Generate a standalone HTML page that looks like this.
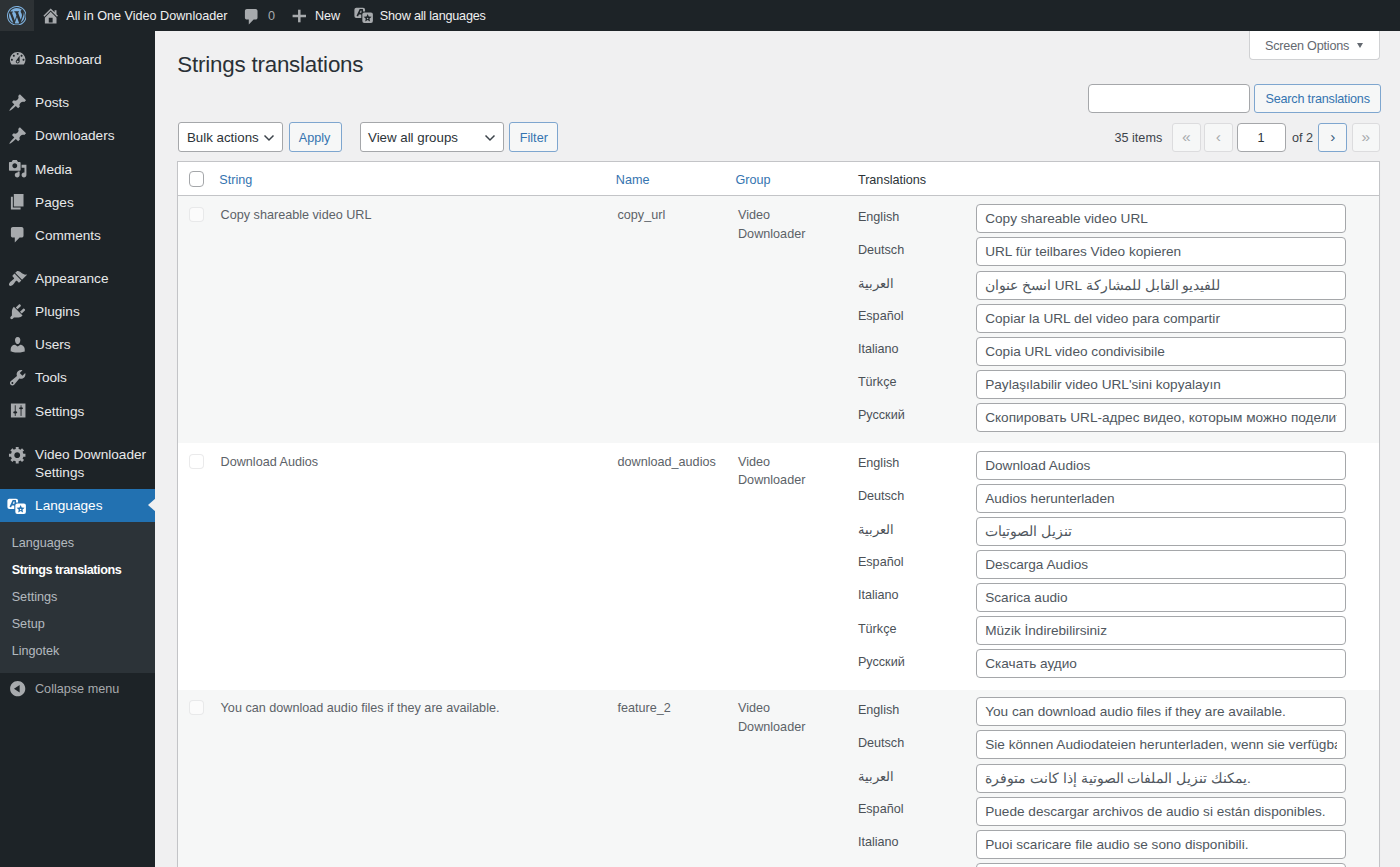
<!DOCTYPE html>
<html><head><meta charset="utf-8"><title>Strings translations</title>
<style>
html,body{margin:0;padding:0;width:1400px;height:867px;overflow:hidden;background:#f0f0f1}
body{position:relative;font-family:"Liberation Sans", sans-serif}
#root{position:absolute;left:0;top:0;width:1400px;height:867px;overflow:hidden;background:#f0f0f1}
.t{position:absolute;white-space:nowrap;line-height:normal;font-family:"Liberation Sans", sans-serif}
</style></head><body><div id="root">
<div style="position:absolute;left:0.00px;top:0.00px;width:1400.00px;height:31.10px;background:#1d2327"></div>
<div style="position:absolute;left:0.00px;top:0.00px;width:34.00px;height:31.10px;background:#2d3235"></div>
<svg style="position:absolute;left:6.90px;top:5.80px" width="19.60" height="19.60" viewBox="0 0 20 20"><path fill="#7eb1de" d="M20 10c0-5.52-4.48-10-10-10S0 4.48 0 10s4.48 10 10 10 10-4.48 10-10zM10 1.01c4.97 0 8.99 4.02 8.99 8.99s-4.02 8.99-8.99 8.99S1.01 14.970 1.01 10 5.03 1.01 10 1.01zM8.01 14.82L4.96 6.61c.49-.03 1.05-.08 1.05-.08.43-.05.38-1.01-.06-.99 0 0-1.290.1-2.13.1-.15 0-.33 0-.52-.01 1.44-2.17 3.9-3.6 6.7-3.6 2.09 0 3.99.79 5.41 2.09-.6-.08-1.45.35-1.45 1.42 0 .66.38 1.22.79 1.880.31.54.5 1.22.5 2.21 0 1.34-1.27 4.48-1.27 4.48l-2.71-7.5c.48-.03.75-.16.75-.16.43-.05.38-1.1-.05-1.08 0 0-1.3.11-2.140.11-.78 0-2.11-.11-2.11-.11-.43-.02-.48 1.06-.05 1.08l.84.08 1.12 3.04zm6.02 2.15L16.64 10s.67-1.69.39-3.81c.63 1.14.94 2.42.94 3.81 0 2.96-1.56 5.58-3.94 6.97zM2.68 6.77L6.5 17.25c-2.67-1.3-4.47-4.08-4.470-7.25 0-1.16.2-2.23.65-3.23zm7.45 4.53l2.29 6.25c-.75.27-1.57.42-2.42.42-.72 0-1.41-.11-2.06-.3z"/></svg>
<svg style="position:absolute;left:40.60px;top:5.80px" width="19.40" height="19.40" viewBox="0 0 20 20"><path fill="#a7aaad" d="M16 8.5l1.53 1.53-1.06 1.06L10 4.62l-6.47 6.47-1.06-1.06L10 2.5l4 4v-2h2v4zm-6-2.46l6 5.99V18H4v-5.97zM12 17v-5H8v5h4z"/></svg>
<div class="t" style="left:66.30px;top:9.16px;font-size:12.64px;color:#f0f0f1;font-weight:400;">All in One Video Downloader</div>
<svg style="position:absolute;left:242.00px;top:7.00px" width="19.40" height="19.40" viewBox="0 0 20 20"><path fill="#a7aaad" d="M5 2h9c1.1 0 2 .9 2 2v7c0 1.1-.9 2-2 2h-2l-5 5v-5H5c-1.1 0-2-.9-2-2V4c0-1.1.9-2 2-2z"/></svg>
<div class="t" style="left:268.00px;top:9.16px;font-size:12.64px;color:#a7aaad;font-weight:400;">0</div>
<svg style="position:absolute;left:290px;top:7px" width="18" height="18" viewBox="0 0 18 18"><rect x="2.6" y="7.75" width="13.4" height="2.5" fill="#a7aaad"/><rect x="8.05" y="2.7" width="2.5" height="12.6" fill="#a7aaad"/></svg>
<div class="t" style="left:314.90px;top:9.16px;font-size:12.64px;color:#f0f0f1;font-weight:400;">New</div>
<svg style="position:absolute;left:353.50px;top:5.30px" width="19.40" height="19.40" viewBox="0 0 20 20">
<rect x="0.4" y="2.9" width="11" height="10.5" rx="2" fill="#a7aaad"/>
<path d="M3.4 11.4 L6.4 4.9 L8.4 4.9 L8.9 10.5 M5.2 8.9 L8.6 8.9" fill="none" stroke="#1d2327" stroke-width="1.7"/>
<rect x="7.5" y="6.7" width="13.1" height="13" rx="2.6" fill="#1d2327"/>
<rect x="8.6" y="7.8" width="10.9" height="10.8" rx="2" fill="#a7aaad"/>
<path d="M14.05 9.20 L15.23 11.88 L18.14 12.17 L15.95 14.12 L16.58 16.98 L14.05 15.50 L11.52 16.98 L12.15 14.12 L9.96 12.17 L12.87 11.88z" fill="#1d2327"/>
<circle cx="14.05" cy="13.9" r="0.8" fill="#a7aaad"/>
</svg>
<div class="t" style="left:379.80px;top:9.16px;font-size:12.64px;color:#f0f0f1;font-weight:400;letter-spacing:-0.2px">Show all languages</div>
<div style="position:absolute;left:0.00px;top:31.10px;width:155.20px;height:835.90px;background:#1d2327"></div>
<svg style="position:absolute;left:7.80px;top:49.20px" width="19.40" height="19.40" viewBox="0 0 20 20"><path fill="#a7aaad" d="M3.76 16h12.48c1.1-1.37 1.76-3.11 1.76-5 0-4.42-3.58-8-8-8s-8 3.58-8 8c0 1.89.66 3.63 1.76 5zM10 4c.55 0 1 .45 1 1s-.45 1-1 1-1-.45-1-1 .45-1 1-1zM6 6c.55 0 1 .45 1 1s-.45 1-1 1-1-.45-1-1 .45-1 1-1zm8 0c.55 0 1 .45 1 1s-.45 1-1 1-1-.45-1-1 .45-1 1-1zm-5.37 5.55L12 7v6c0 1.1-.9 2-2 2s-2-.9-2-2c0-.57.24-1.08.63-1.45zM4 10c.55 0 1 .45 1 1s-.45 1-1 1-1-.45-1-1 .45-1 1-1zm12 0c.55 0 1 .45 1 1s-.45 1-1 1-1-.45-1-1 .45-1 1-1zm-5 3c0-.55-.45-1-1-1s-1 .45-1 1 .45 1 1 1 1-.45 1-1z"/></svg>
<div class="t" style="left:35.10px;top:51.88px;font-size:13.61px;color:#e8e9ea;font-weight:400;">Dashboard</div>
<svg style="position:absolute;left:7.80px;top:92.80px" width="19.40" height="19.40" viewBox="0 0 20 20"><path fill="#a7aaad" d="M10.44 3.02l1.82-1.82 6.36 6.35-1.83 1.82c-1.05-.68-2.48-.57-3.41.36l-.75.75c-.92.93-1.04 2.35-.35 3.41l-1.83 1.82-2.41-2.41-2.8 2.79c-.42.42-3.38 2.71-3.8 2.29s1.86-3.39 2.28-3.81l2.79-2.79L4.1 9.36l1.83-1.82c1.05.69 2.48.57 3.4-.36l.75-.75c.93-.92 1.05-2.35.36-3.41z"/></svg>
<div class="t" style="left:35.10px;top:95.48px;font-size:13.61px;color:#e8e9ea;font-weight:400;">Posts</div>
<svg style="position:absolute;left:7.80px;top:125.80px" width="19.40" height="19.40" viewBox="0 0 20 20"><path fill="#a7aaad" d="M10.44 3.02l1.82-1.82 6.36 6.35-1.83 1.82c-1.05-.68-2.48-.57-3.41.36l-.75.75c-.92.93-1.04 2.35-.35 3.41l-1.83 1.82-2.41-2.41-2.8 2.79c-.42.42-3.38 2.71-3.8 2.29s1.86-3.39 2.28-3.81l2.79-2.79L4.1 9.36l1.83-1.82c1.05.69 2.48.57 3.4-.36l.75-.75c.93-.92 1.05-2.35.36-3.41z"/></svg>
<div class="t" style="left:35.10px;top:128.48px;font-size:13.61px;color:#e8e9ea;font-weight:400;">Downloaders</div>
<svg style="position:absolute;left:7.80px;top:158.90px" width="19.40" height="19.40" viewBox="0 0 20 20"><path fill="#a7aaad" d="M13 11V4c0-.55-.45-1-1-1h-1.67L9 1H5L3.67 3H2c-.55 0-1 .45-1 1v7c0 .55.45 1 1 1h10c.55 0 1-.45 1-1zM7 4.5c1.38 0 2.5 1.12 2.5 2.5S8.38 9.5 7 9.5 4.5 8.38 4.5 7 5.62 4.5 7 4.5zM14 6h5v10.5c0 1.38-1.12 2.5-2.5 2.5S14 17.88 14 16.5s1.12-2.5 2.5-2.5c.17 0 .34.02.5.05V9h-3V6zm-4 8.05V13h2v3.5c0 1.38-1.12 2.5-2.5 2.5S7 17.88 7 16.5 8.12 14 9.5 14c.17 0 .34.02.5.05z"/></svg>
<div class="t" style="left:35.10px;top:161.58px;font-size:13.61px;color:#e8e9ea;font-weight:400;">Media</div>
<svg style="position:absolute;left:7.80px;top:192.00px" width="19.40" height="19.40" viewBox="0 0 20 20"><path fill="#a7aaad" d="M6 15V2h10v13H6zm-1 1h8v2H3V5h2v11z"/></svg>
<div class="t" style="left:35.10px;top:194.68px;font-size:13.61px;color:#e8e9ea;font-weight:400;">Pages</div>
<svg style="position:absolute;left:7.80px;top:225.00px" width="19.40" height="19.40" viewBox="0 0 20 20"><path fill="#a7aaad" d="M5 2h9c1.1 0 2 .9 2 2v7c0 1.1-.9 2-2 2h-2l-5 5v-5H5c-1.1 0-2-.9-2-2V4c0-1.1.9-2 2-2z"/></svg>
<div class="t" style="left:35.10px;top:227.68px;font-size:13.61px;color:#e8e9ea;font-weight:400;">Comments</div>
<svg style="position:absolute;left:7.80px;top:268.70px" width="19.40" height="19.40" viewBox="0 0 20 20"><path fill="#a7aaad" d="M14.48 11.06L7.41 3.99l1.5-1.5c.5-.56 2.3-.47 3.51.32 1.21.8 1.43 1.28 2.91 2.1 1.18.64 2.45 1.26 4.45.85zm-.71.71L6.7 4.7 4.93 6.47c-.39.39-.39 1.02 0 1.41l1.06 1.06c.39.39.39 1.03 0 1.42-.6.6-1.43 1.11-2.21 1.69-.35.26-.7.53-1.01.84C1.43 14.23.4 16.08 1.4 17.07c.99 1 2.84-.03 4.18-1.36.31-.31.58-.66.85-1.02.57-.78 1.08-1.61 1.69-2.21.39-.39 1.02-.39 1.410 0l1.06 1.06c.39.39 1.02.39 1.41 0z"/></svg>
<div class="t" style="left:35.10px;top:271.38px;font-size:13.61px;color:#e8e9ea;font-weight:400;">Appearance</div>
<svg style="position:absolute;left:7.80px;top:301.70px" width="19.40" height="19.40" viewBox="0 0 20 20"><path fill="#a7aaad" d="M13.11 4.36L9.87 7.6 8 5.73l3.24-3.24c.35-.34 1.05-.2 1.56.32.52.51.66 1.21.31 1.55zm-8 1.77l.91-1.12 9.01 9.01-1.19.84c-.71.71-2.63 1.16-3.82 1.16H6.14L4.9 17.26c-.59.59-1.54.59-2.12 0-.59-.58-.59-1.53 0-2.12l1.24-1.24v-3.88c0-1.130.4-3.19 1.09-3.89zm7.26 3.97l3.24-3.24c.34-.35 1.04-.21 1.55.31.52.51.66 1.21.31 1.55l-3.24 3.25z"/></svg>
<div class="t" style="left:35.10px;top:304.38px;font-size:13.61px;color:#e8e9ea;font-weight:400;">Plugins</div>
<svg style="position:absolute;left:7.80px;top:334.80px" width="19.40" height="19.40" viewBox="0 0 20 20"><path fill="#a7aaad" d="M10 9.25c-2.27 0-2.73-3.44-2.73-3.44C7 4.02 7.82 2 9.97 2c2.16 0 2.98 2.02 2.71 3.81 0 0-.41 3.44-2.68 3.44zm0 2.57L12.72 10c2.39 0 4.52 2.33 4.52 4.53v2.49s-3.65 1.13-7.24 1.13c-3.65 0-7.24-1.13-7.24-1.13v-2.49c0-2.25 1.94-4.48 4.47-4.48z"/></svg>
<div class="t" style="left:35.10px;top:337.48px;font-size:13.61px;color:#e8e9ea;font-weight:400;">Users</div>
<svg style="position:absolute;left:7.80px;top:367.80px" width="19.40" height="19.40" viewBox="0 0 20 20"><path fill="#a7aaad" d="M16.68 9.77c-1.34 1.34-3.3 1.67-4.95.99l-5.41 6.52c-.99.99-2.59.99-3.58 0s-.99-2.59 0-3.57l6.52-5.42c-.68-1.65-.35-3.61.99-4.95 1.28-1.28 3.12-1.62 4.72-1.06l-2.89 2.89 2.82 2.82 2.86-2.870c.53 1.58.18 3.39-1.08 4.65zM3.81 16.21c.4.39 1.04.39 1.43 0 .4-.4.4-1.04 0-1.43-.39-.4-1.03-.4-1.430 0-.39.39-.39 1.03 0 1.43z"/></svg>
<div class="t" style="left:35.10px;top:370.48px;font-size:13.61px;color:#e8e9ea;font-weight:400;">Tools</div>
<svg style="position:absolute;left:7.8px;top:400.90px" width="19.4" height="19.4" viewBox="0 0 20 20"><rect x="3" y="2.6" width="15" height="14.4" fill="#a7aaad"/><rect x="7" y="4.4" width="0.9" height="11" fill="#1d2327"/><rect x="13" y="4.4" width="0.9" height="11" fill="#1d2327"/><ellipse cx="7.45" cy="11.8" rx="2.1" ry="1.1" fill="#1d2327"/><ellipse cx="13.45" cy="7.5" rx="2.1" ry="1.1" fill="#1d2327"/></svg>
<div class="t" style="left:35.10px;top:403.58px;font-size:13.61px;color:#e8e9ea;font-weight:400;">Settings</div>
<svg style="position:absolute;left:7.80px;top:444.80px" width="19.40" height="19.40" viewBox="0 0 20 20"><path fill="#a7aaad" d="M18 12h-2.18c-.17.7-.44 1.35-.81 1.93l1.54 1.54-2.1 2.1-1.54-1.54c-.58.36-1.23.63-1.91.79V19H8v-2.18c-.68-.16-1.33-.43-1.91-.79l-1.54 1.54-2.12-2.12 1.54-1.54c-.36-.58-.63-1.23-.79-1.91H1V9.03h2.17c.16-.7.44-1.35.8-1.94L2.43 5.55l2.1-2.1 1.54 1.54c.58-.37 1.24-.64 1.93-.81V2h3v2.18c.68.16 1.33.43 1.91.79l1.54-1.54 2.12 2.12-1.54 1.54c.36.59.64 1.240.8 1.94H18V12zm-8.5 1.5c1.66 0 3-1.34 3-3s-1.34-3-3-3-3 1.34-3 3 1.34 3 3 3z"/></svg>
<div class="t" style="left:35.10px;top:447.48px;font-size:13.61px;color:#e8e9ea;font-weight:400;">Video Downloader</div>
<div class="t" style="left:35.10px;top:464.98px;font-size:13.61px;color:#e8e9ea;font-weight:400;">Settings</div>
<div style="position:absolute;left:0.00px;top:489.00px;width:155.20px;height:33.10px;background:#2271b1"></div>
<svg style="position:absolute;left:7.30px;top:496.00px" width="19.40" height="19.40" viewBox="0 0 20 20">
<rect x="0.4" y="2.9" width="11" height="10.5" rx="2" fill="#ffffff"/>
<path d="M3.4 11.4 L6.4 4.9 L8.4 4.9 L8.9 10.5 M5.2 8.9 L8.6 8.9" fill="none" stroke="#2271b1" stroke-width="1.7"/>
<rect x="7.5" y="6.7" width="13.1" height="13" rx="2.6" fill="#2271b1"/>
<rect x="8.6" y="7.8" width="10.9" height="10.8" rx="2" fill="#ffffff"/>
<path d="M14.05 9.20 L15.23 11.88 L18.14 12.17 L15.95 14.12 L16.58 16.98 L14.05 15.50 L11.52 16.98 L12.15 14.12 L9.96 12.17 L12.87 11.88z" fill="#2271b1"/>
<circle cx="14.05" cy="13.9" r="0.8" fill="#ffffff"/>
</svg>
<div class="t" style="left:35.10px;top:497.88px;font-size:13.61px;color:#ffffff;font-weight:400;">Languages</div>
<div style="position:absolute;left:147.5px;top:497.6px;width:0;height:0;border-top:7.8px solid transparent;border-bottom:7.8px solid transparent;border-right:8px solid #f0f0f1"></div>
<div style="position:absolute;left:0.00px;top:522.10px;width:155.20px;height:150.70px;background:#2c3338"></div>
<div class="t" style="left:11.70px;top:535.86px;font-size:12.64px;color:rgba(240,246,252,.7);font-weight:400;">Languages</div>
<div class="t" style="left:11.70px;top:562.96px;font-size:12.64px;color:#ffffff;font-weight:700;letter-spacing:-0.45px">Strings translations</div>
<div class="t" style="left:11.70px;top:590.06px;font-size:12.64px;color:rgba(240,246,252,.7);font-weight:400;">Settings</div>
<div class="t" style="left:11.70px;top:617.06px;font-size:12.64px;color:rgba(240,246,252,.7);font-weight:400;">Setup</div>
<div class="t" style="left:11.70px;top:644.16px;font-size:12.64px;color:rgba(240,246,252,.7);font-weight:400;">Lingotek</div>
<svg style="position:absolute;left:7.50px;top:679.00px" width="19.40" height="19.40" viewBox="0 0 20 20"><path fill="#a7aaad" d="M10 2.16c4.33 0 7.84 3.51 7.84 7.84s-3.51 7.84-7.84 7.84S2.16 14.33 2.16 10 5.71 2.16 10 2.16zm2 11.72V6.12L6.18 9.97z"/></svg>
<div class="t" style="left:35.00px;top:682.06px;font-size:12.64px;color:#a7aaad;font-weight:400;">Collapse menu</div>
<div class="t" style="left:177.20px;top:52.16px;font-size:22.36px;color:#2a3036;font-weight:400;letter-spacing:-0.2px">Strings translations</div>
<div style="position:absolute;left:1248.80px;top:31.10px;width:131.20px;height:28.90px;background:#fff;border:1px solid #d0d1d3;border-top:none;border-radius:0 0 4px 4px;box-sizing:border-box"></div>
<div class="t" style="left:1265.00px;top:39.06px;font-size:12.64px;color:#646970;font-weight:400;letter-spacing:-0.2px">Screen Options</div>
<div style="position:absolute;left:1356.6px;top:43.0px;width:0;height:0;border-left:3.6px solid transparent;border-right:3.6px solid transparent;border-top:5.6px solid #646970"></div>
<div style="position:absolute;left:1087.50px;top:83.80px;width:162.50px;height:28.80px;background:#fff;border:1px solid #a5a7aa;border-radius:4px;box-sizing:border-box"></div>
<div style="position:absolute;left:1254.00px;top:83.80px;width:126.50px;height:28.80px;background:#f6f7f7;border:1px solid #7ea6cf;border-radius:3px;box-sizing:border-box"></div>
<div class="t" style="left:1265.50px;top:91.76px;font-size:12.64px;color:#3574b0;font-weight:400;letter-spacing:-0.2px">Search translations</div>
<div style="position:absolute;left:178.30px;top:122.20px;width:104.60px;height:29.40px;background:#fff;border:1px solid #a5a7aa;border-radius:3px;box-sizing:border-box"></div>
<div class="t" style="left:187.00px;top:129.86px;font-size:13.30px;color:#2c3338;font-weight:400;">Bulk actions</div>
<svg style="position:absolute;left:263.00px;top:134.10px" width="12" height="8" viewBox="0 0 12 8"><path d="M1.5 1.5 L6 6 L10.5 1.5" fill="none" stroke="#3c434a" stroke-width="1.45"/></svg>
<div style="position:absolute;left:288.90px;top:122.20px;width:53.00px;height:29.40px;background:#f6f7f7;border:1px solid #7ea6cf;border-radius:3px;box-sizing:border-box"></div>
<div class="t" style="left:298.80px;top:131.16px;font-size:12.64px;color:#3574b0;font-weight:400;">Apply</div>
<div style="position:absolute;left:359.70px;top:122.20px;width:144.10px;height:29.40px;background:#fff;border:1px solid #a5a7aa;border-radius:3px;box-sizing:border-box"></div>
<div class="t" style="left:368.00px;top:129.86px;font-size:13.30px;color:#2c3338;font-weight:400;">View all groups</div>
<svg style="position:absolute;left:484.00px;top:134.10px" width="12" height="8" viewBox="0 0 12 8"><path d="M1.5 1.5 L6 6 L10.5 1.5" fill="none" stroke="#3c434a" stroke-width="1.45"/></svg>
<div style="position:absolute;left:509.30px;top:122.20px;width:48.50px;height:29.40px;background:#f6f7f7;border:1px solid #7ea6cf;border-radius:3px;box-sizing:border-box"></div>
<div class="t" style="left:519.80px;top:131.16px;font-size:12.64px;color:#3574b0;font-weight:400;">Filter</div>
<div class="t" style="left:1114.50px;top:131.26px;font-size:12.64px;color:#3c434a;font-weight:400;">35 items</div>
<div style="position:absolute;left:1172.00px;top:122.50px;width:28.50px;height:29.50px;background:#f6f7f7;border:1px solid #dcdcde;border-radius:3px;box-sizing:border-box"></div>
<div class="t" style="left:1172.00px;top:122.5px;width:28.50px;text-align:center;line-height:28.8px;font-size:15.56px;color:#a7aaad">&laquo;</div>
<div style="position:absolute;left:1204.00px;top:122.50px;width:28.50px;height:29.50px;background:#f6f7f7;border:1px solid #dcdcde;border-radius:3px;box-sizing:border-box"></div>
<div class="t" style="left:1204.00px;top:122.5px;width:28.50px;text-align:center;line-height:28.8px;font-size:15.56px;color:#a7aaad">&lsaquo;</div>
<div style="position:absolute;left:1237.00px;top:122.50px;width:48.50px;height:29.50px;background:#fff;border:1px solid #a5a7aa;border-radius:4px;box-sizing:border-box"></div>
<div class="t" style="left:1257.50px;top:131.26px;font-size:12.64px;color:#2c3338;font-weight:400;">1</div>
<div class="t" style="left:1292.00px;top:131.26px;font-size:12.64px;color:#3c434a;font-weight:400;">of 2</div>
<div style="position:absolute;left:1318.30px;top:122.50px;width:29.20px;height:29.50px;background:#f6f7f7;border:1px solid #7ea6cf;border-radius:3px;box-sizing:border-box"></div>
<div class="t" style="left:1318.30px;top:122.5px;width:29.20px;text-align:center;line-height:28.8px;font-size:15.56px;color:#3d5f80">&rsaquo;</div>
<div style="position:absolute;left:1351.50px;top:122.50px;width:28.50px;height:29.50px;background:#f6f7f7;border:1px solid #dcdcde;border-radius:3px;box-sizing:border-box"></div>
<div class="t" style="left:1351.50px;top:122.5px;width:28.50px;text-align:center;line-height:28.8px;font-size:15.56px;color:#a7aaad">&raquo;</div>
<div style="position:absolute;left:177.30px;top:160.50px;width:1203.20px;height:711.50px;background:#fff;border:1px solid #c3c4c7;box-sizing:border-box;box-shadow:0 1px 1px rgba(0,0,0,.04)"></div>
<div style="position:absolute;left:178.30px;top:194.60px;width:1201.20px;height:1.00px;background:#c3c4c7"></div>
<div style="position:absolute;left:188.60px;top:171.10px;width:15.60px;height:15.60px;background:#fff;border:1px solid #a5a7aa;border-radius:4px;box-sizing:border-box"></div>
<div class="t" style="left:219.30px;top:173.16px;font-size:12.64px;color:#3574b0;font-weight:400;">String</div>
<div class="t" style="left:615.80px;top:173.16px;font-size:12.64px;color:#3574b0;font-weight:400;">Name</div>
<div class="t" style="left:735.50px;top:173.16px;font-size:12.64px;color:#3574b0;font-weight:400;">Group</div>
<div class="t" style="left:857.90px;top:173.16px;font-size:12.64px;color:#2c3338;font-weight:400;">Translations</div>
<div style="position:absolute;left:178.30px;top:195.60px;width:1201.20px;height:247.00px;background:#f6f7f7"></div>
<div style="position:absolute;left:189.30px;top:207.40px;width:14.30px;height:14.80px;background:rgba(255,255,255,.5);border:1px solid rgba(220,220,222,.6);border-radius:4px;box-sizing:border-box"></div>
<div class="t" style="left:220.60px;top:208.36px;font-size:12.64px;color:#5c6268;font-weight:400;">Copy shareable video URL</div>
<div class="t" style="left:617.50px;top:208.36px;font-size:12.64px;color:#5c6268;font-weight:400;">copy_url</div>
<div class="t" style="left:738.00px;top:208.36px;font-size:12.64px;color:#5c6268;font-weight:400;">Video</div>
<div class="t" style="left:738.00px;top:226.56px;font-size:12.64px;color:#5c6268;font-weight:400;">Downloader</div>
<div class="t" style="left:857.90px;top:209.66px;font-size:12.64px;color:#4b5157;font-weight:400;">English</div>
<div style="position:absolute;left:976.10px;top:204.40px;width:369.70px;height:29.00px;background:#fff;border:1px solid #a5a7aa;border-radius:4px;box-sizing:border-box"></div>
<div class="t" style="left:985.2px;top:205.40px;width:352px;height:27px;overflow:hidden;line-height:27px;font-size:13.61px;color:#50575e;white-space:nowrap;direction:ltr;text-align:left"><span dir="ltr">Copy shareable video URL</span></div>
<div class="t" style="left:857.90px;top:242.73px;font-size:12.64px;color:#4b5157;font-weight:400;">Deutsch</div>
<div style="position:absolute;left:976.10px;top:237.47px;width:369.70px;height:29.00px;background:#fff;border:1px solid #a5a7aa;border-radius:4px;box-sizing:border-box"></div>
<div class="t" style="left:985.2px;top:238.47px;width:352px;height:27px;overflow:hidden;line-height:27px;font-size:13.61px;color:#50575e;white-space:nowrap;direction:ltr;text-align:left"><span dir="ltr">URL für teilbares Video kopieren</span></div>
<div class="t" style="left:857.90px;top:275.80px;font-size:12.64px;color:#4b5157;font-weight:400;">العربية</div>
<div style="position:absolute;left:976.10px;top:270.54px;width:369.70px;height:29.00px;background:#fff;border:1px solid #a5a7aa;border-radius:4px;box-sizing:border-box"></div>
<div class="t" style="left:985.2px;top:271.54px;width:352px;height:27px;overflow:hidden;line-height:27px;font-size:13.61px;color:#50575e;white-space:nowrap;direction:ltr;text-align:left"><span dir="rtl">للفيديو القابل للمشاركة URL انسخ عنوان</span></div>
<div class="t" style="left:857.90px;top:308.87px;font-size:12.64px;color:#4b5157;font-weight:400;">Español</div>
<div style="position:absolute;left:976.10px;top:303.61px;width:369.70px;height:29.00px;background:#fff;border:1px solid #a5a7aa;border-radius:4px;box-sizing:border-box"></div>
<div class="t" style="left:985.2px;top:304.61px;width:352px;height:27px;overflow:hidden;line-height:27px;font-size:13.61px;color:#50575e;white-space:nowrap;direction:ltr;text-align:left"><span dir="ltr">Copiar la URL del video para compartir</span></div>
<div class="t" style="left:857.90px;top:341.94px;font-size:12.64px;color:#4b5157;font-weight:400;">Italiano</div>
<div style="position:absolute;left:976.10px;top:336.68px;width:369.70px;height:29.00px;background:#fff;border:1px solid #a5a7aa;border-radius:4px;box-sizing:border-box"></div>
<div class="t" style="left:985.2px;top:337.68px;width:352px;height:27px;overflow:hidden;line-height:27px;font-size:13.61px;color:#50575e;white-space:nowrap;direction:ltr;text-align:left"><span dir="ltr">Copia URL video condivisibile</span></div>
<div class="t" style="left:857.90px;top:375.01px;font-size:12.64px;color:#4b5157;font-weight:400;">Türkçe</div>
<div style="position:absolute;left:976.10px;top:369.75px;width:369.70px;height:29.00px;background:#fff;border:1px solid #a5a7aa;border-radius:4px;box-sizing:border-box"></div>
<div class="t" style="left:985.2px;top:370.75px;width:352px;height:27px;overflow:hidden;line-height:27px;font-size:13.61px;color:#50575e;white-space:nowrap;direction:ltr;text-align:left"><span dir="ltr">Paylaşılabilir video URL'sini kopyalayın</span></div>
<div class="t" style="left:857.90px;top:408.08px;font-size:12.64px;color:#4b5157;font-weight:400;">Русский</div>
<div style="position:absolute;left:976.10px;top:402.82px;width:369.70px;height:29.00px;background:#fff;border:1px solid #a5a7aa;border-radius:4px;box-sizing:border-box"></div>
<div class="t" style="left:985.2px;top:403.82px;width:352px;height:27px;overflow:hidden;line-height:27px;font-size:13.61px;color:#50575e;white-space:nowrap;direction:ltr;text-align:left"><span dir="ltr">Скопировать URL-адрес видео, которым можно поделиться</span></div>
<div style="position:absolute;left:178.30px;top:442.60px;width:1201.20px;height:247.00px;background:#fff"></div>
<div style="position:absolute;left:189.30px;top:453.90px;width:14.30px;height:14.80px;background:rgba(255,255,255,.5);border:1px solid rgba(220,220,222,.6);border-radius:4px;box-sizing:border-box"></div>
<div class="t" style="left:220.60px;top:454.86px;font-size:12.64px;color:#5c6268;font-weight:400;">Download Audios</div>
<div class="t" style="left:617.50px;top:454.86px;font-size:12.64px;color:#5c6268;font-weight:400;">download_audios</div>
<div class="t" style="left:738.00px;top:454.86px;font-size:12.64px;color:#5c6268;font-weight:400;">Video</div>
<div class="t" style="left:738.00px;top:473.06px;font-size:12.64px;color:#5c6268;font-weight:400;">Downloader</div>
<div class="t" style="left:857.90px;top:456.16px;font-size:12.64px;color:#4b5157;font-weight:400;">English</div>
<div style="position:absolute;left:976.10px;top:450.90px;width:369.70px;height:29.00px;background:#fff;border:1px solid #a5a7aa;border-radius:4px;box-sizing:border-box"></div>
<div class="t" style="left:985.2px;top:451.90px;width:352px;height:27px;overflow:hidden;line-height:27px;font-size:13.61px;color:#50575e;white-space:nowrap;direction:ltr;text-align:left"><span dir="ltr">Download Audios</span></div>
<div class="t" style="left:857.90px;top:489.23px;font-size:12.64px;color:#4b5157;font-weight:400;">Deutsch</div>
<div style="position:absolute;left:976.10px;top:483.97px;width:369.70px;height:29.00px;background:#fff;border:1px solid #a5a7aa;border-radius:4px;box-sizing:border-box"></div>
<div class="t" style="left:985.2px;top:484.97px;width:352px;height:27px;overflow:hidden;line-height:27px;font-size:13.61px;color:#50575e;white-space:nowrap;direction:ltr;text-align:left"><span dir="ltr">Audios herunterladen</span></div>
<div class="t" style="left:857.90px;top:522.30px;font-size:12.64px;color:#4b5157;font-weight:400;">العربية</div>
<div style="position:absolute;left:976.10px;top:517.04px;width:369.70px;height:29.00px;background:#fff;border:1px solid #a5a7aa;border-radius:4px;box-sizing:border-box"></div>
<div class="t" style="left:985.2px;top:518.04px;width:352px;height:27px;overflow:hidden;line-height:27px;font-size:13.61px;color:#50575e;white-space:nowrap;direction:ltr;text-align:left"><span dir="ltr">تنزيل الصوتيات</span></div>
<div class="t" style="left:857.90px;top:555.37px;font-size:12.64px;color:#4b5157;font-weight:400;">Español</div>
<div style="position:absolute;left:976.10px;top:550.11px;width:369.70px;height:29.00px;background:#fff;border:1px solid #a5a7aa;border-radius:4px;box-sizing:border-box"></div>
<div class="t" style="left:985.2px;top:551.11px;width:352px;height:27px;overflow:hidden;line-height:27px;font-size:13.61px;color:#50575e;white-space:nowrap;direction:ltr;text-align:left"><span dir="ltr">Descarga Audios</span></div>
<div class="t" style="left:857.90px;top:588.44px;font-size:12.64px;color:#4b5157;font-weight:400;">Italiano</div>
<div style="position:absolute;left:976.10px;top:583.18px;width:369.70px;height:29.00px;background:#fff;border:1px solid #a5a7aa;border-radius:4px;box-sizing:border-box"></div>
<div class="t" style="left:985.2px;top:584.18px;width:352px;height:27px;overflow:hidden;line-height:27px;font-size:13.61px;color:#50575e;white-space:nowrap;direction:ltr;text-align:left"><span dir="ltr">Scarica audio</span></div>
<div class="t" style="left:857.90px;top:621.51px;font-size:12.64px;color:#4b5157;font-weight:400;">Türkçe</div>
<div style="position:absolute;left:976.10px;top:616.25px;width:369.70px;height:29.00px;background:#fff;border:1px solid #a5a7aa;border-radius:4px;box-sizing:border-box"></div>
<div class="t" style="left:985.2px;top:617.25px;width:352px;height:27px;overflow:hidden;line-height:27px;font-size:13.61px;color:#50575e;white-space:nowrap;direction:ltr;text-align:left"><span dir="ltr">Müzik İndirebilirsiniz</span></div>
<div class="t" style="left:857.90px;top:654.58px;font-size:12.64px;color:#4b5157;font-weight:400;">Русский</div>
<div style="position:absolute;left:976.10px;top:649.32px;width:369.70px;height:29.00px;background:#fff;border:1px solid #a5a7aa;border-radius:4px;box-sizing:border-box"></div>
<div class="t" style="left:985.2px;top:650.32px;width:352px;height:27px;overflow:hidden;line-height:27px;font-size:13.61px;color:#50575e;white-space:nowrap;direction:ltr;text-align:left"><span dir="ltr">Скачать аудио</span></div>
<div style="position:absolute;left:178.30px;top:689.60px;width:1201.20px;height:182.40px;background:#f6f7f7"></div>
<div style="position:absolute;left:189.30px;top:700.40px;width:14.30px;height:14.80px;background:rgba(255,255,255,.5);border:1px solid rgba(220,220,222,.6);border-radius:4px;box-sizing:border-box"></div>
<div class="t" style="left:220.60px;top:701.36px;font-size:12.64px;color:#5c6268;font-weight:400;">You can download audio files if they are available.</div>
<div class="t" style="left:617.50px;top:701.36px;font-size:12.64px;color:#5c6268;font-weight:400;">feature_2</div>
<div class="t" style="left:738.00px;top:701.36px;font-size:12.64px;color:#5c6268;font-weight:400;">Video</div>
<div class="t" style="left:738.00px;top:719.56px;font-size:12.64px;color:#5c6268;font-weight:400;">Downloader</div>
<div class="t" style="left:857.90px;top:702.66px;font-size:12.64px;color:#4b5157;font-weight:400;">English</div>
<div style="position:absolute;left:976.10px;top:697.40px;width:369.70px;height:29.00px;background:#fff;border:1px solid #a5a7aa;border-radius:4px;box-sizing:border-box"></div>
<div class="t" style="left:985.2px;top:698.40px;width:352px;height:27px;overflow:hidden;line-height:27px;font-size:13.61px;color:#50575e;white-space:nowrap;direction:ltr;text-align:left"><span dir="ltr">You can download audio files if they are available.</span></div>
<div class="t" style="left:857.90px;top:735.73px;font-size:12.64px;color:#4b5157;font-weight:400;">Deutsch</div>
<div style="position:absolute;left:976.10px;top:730.47px;width:369.70px;height:29.00px;background:#fff;border:1px solid #a5a7aa;border-radius:4px;box-sizing:border-box"></div>
<div class="t" style="left:985.2px;top:731.47px;width:352px;height:27px;overflow:hidden;line-height:27px;font-size:13.61px;color:#50575e;white-space:nowrap;direction:ltr;text-align:left"><span dir="ltr">Sie können Audiodateien herunterladen, wenn sie verfügbar sind.</span></div>
<div class="t" style="left:857.90px;top:768.80px;font-size:12.64px;color:#4b5157;font-weight:400;">العربية</div>
<div style="position:absolute;left:976.10px;top:763.54px;width:369.70px;height:29.00px;background:#fff;border:1px solid #a5a7aa;border-radius:4px;box-sizing:border-box"></div>
<div class="t" style="left:985.2px;top:764.54px;width:352px;height:27px;overflow:hidden;line-height:27px;font-size:13.61px;color:#50575e;white-space:nowrap;direction:ltr;text-align:left"><span dir="ltr">يمكنك تنزيل الملفات الصوتية إذا كانت متوفرة.</span></div>
<div class="t" style="left:857.90px;top:801.87px;font-size:12.64px;color:#4b5157;font-weight:400;">Español</div>
<div style="position:absolute;left:976.10px;top:796.61px;width:369.70px;height:29.00px;background:#fff;border:1px solid #a5a7aa;border-radius:4px;box-sizing:border-box"></div>
<div class="t" style="left:985.2px;top:797.61px;width:352px;height:27px;overflow:hidden;line-height:27px;font-size:13.61px;color:#50575e;white-space:nowrap;direction:ltr;text-align:left"><span dir="ltr">Puede descargar archivos de audio si están disponibles.</span></div>
<div class="t" style="left:857.90px;top:834.94px;font-size:12.64px;color:#4b5157;font-weight:400;">Italiano</div>
<div style="position:absolute;left:976.10px;top:829.68px;width:369.70px;height:29.00px;background:#fff;border:1px solid #a5a7aa;border-radius:4px;box-sizing:border-box"></div>
<div class="t" style="left:985.2px;top:830.68px;width:352px;height:27px;overflow:hidden;line-height:27px;font-size:13.61px;color:#50575e;white-space:nowrap;direction:ltr;text-align:left"><span dir="ltr">Puoi scaricare file audio se sono disponibili.</span></div>
<div class="t" style="left:857.90px;top:868.01px;font-size:12.64px;color:#4b5157;font-weight:400;">Türkçe</div>
<div style="position:absolute;left:976.10px;top:862.75px;width:369.70px;height:29.00px;background:#fff;border:1px solid #a5a7aa;border-radius:4px;box-sizing:border-box"></div>
<div class="t" style="left:985.2px;top:863.75px;width:352px;height:27px;overflow:hidden;line-height:27px;font-size:13.61px;color:#50575e;white-space:nowrap;direction:ltr;text-align:left"><span dir="ltr">Mevcutsa ses dosyalarını indirebilirsiniz.</span></div>
</div></body></html>
